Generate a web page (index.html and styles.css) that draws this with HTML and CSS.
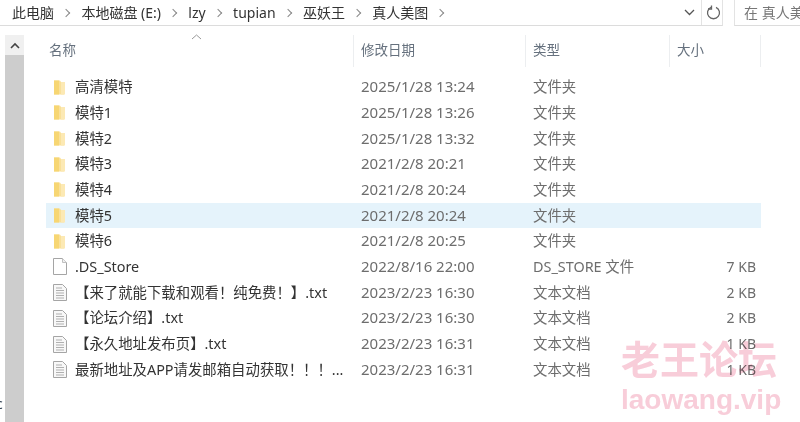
FILE: index.html
```html
<!DOCTYPE html>
<html lang="zh-CN">
<head>
    <meta charset="UTF-8">
    <title>真人美图</title>
    <link rel="stylesheet" href="styles.css">
</head>
<body>
    <svg class="defs" width="0" height="0">
        <symbol id="folder" viewBox="0 0 14 16">
            <path d="M1 1h6l1 1.500h3V15H1z" fill="#f9e09a"/>
            <path d="M8 2.500h4V15H8z" fill="#fce9b4"/>
            <path d="M1 1h5v14H1z" fill="#f7d673"/>
        </symbol>
        <symbol id="file" viewBox="0 0 14 17">
            <path d="M.5.500h9l4 4v12H.5z" fill="#fff" stroke="#a5a5a5"/>
            <path d="M9.500.500v4h4" fill="#f0f0f0" stroke="#c0c0c0"/>
        </symbol>
        <symbol id="txt" viewBox="0 0 14 17">
            <path d="M.5.500h9l4 4v12H.5z" fill="#f8f8f8" stroke="#a5a5a5"/>
            <path d="M3 4h6M3 6.500h8M3 9h8M3 11.500h8M3 14h8" stroke="#b0b0b0" fill="none"/>
        </symbol>
    </svg>

    <div class="topbar">
        <div class="crumbs">
            <span class="crumb first">此电脑</span>
            <span class="crumb">本地磁盘 (E:)</span>
            <span class="crumb">lzy</span>
            <span class="crumb">tupian</span>
            <span class="crumb">巫妖王</span>
            <span class="crumb">真人美图</span>
            <span class="addr-tools">
                <svg class="chev" width="11" height="7" viewBox="0 0 11 7"><path d="M1 1l4.500 4.500L10 1" fill="none" stroke="#555" stroke-width="1.300"/></svg>
                <svg class="refresh" width="15" height="15" viewBox="0 0 15 15"><path d="M5 2.300A6 6 0 1 0 10 2.300" fill="none" stroke="#666" stroke-width="1.300"/><path d="M5.500 .5v3.500h-3.500" fill="none" stroke="#666" stroke-width="1.300"/></svg>
            </span>
        </div>
        <div class="search">在 真人美</div>
    </div>

    <div class="main">
        <div class="scrollbar">
            <div class="scroll-up"><svg width="10" height="7" viewBox="0 0 10 7"><path d="M1 6l4-4 4 4" fill="none" stroke="#444" stroke-width="1.600"/></svg></div>
            <div class="scroll-thumb"></div>
        </div>

        <div class="list">
            <div class="head">
                <span class="name">名称</span>
                <span class="date">修改日期</span>
                <span class="type">类型</span>
                <span class="size">大小</span>
                <svg class="sort" width="11" height="6" viewBox="0 0 11 6"><path d="M1 5l4.500-4L10 5" fill="none" stroke="#999"/></svg>
            </div>

            <div class="row"><svg class="ico"><use href="#folder"/></svg><span class="name">高清模特</span><span class="date">2025/1/28 13:24</span><span class="type">文件夹</span><span class="size"></span></div>
            <div class="row"><svg class="ico"><use href="#folder"/></svg><span class="name">模特1</span><span class="date">2025/1/28 13:26</span><span class="type">文件夹</span><span class="size"></span></div>
            <div class="row"><svg class="ico"><use href="#folder"/></svg><span class="name">模特2</span><span class="date">2025/1/28 13:32</span><span class="type">文件夹</span><span class="size"></span></div>
            <div class="row"><svg class="ico"><use href="#folder"/></svg><span class="name">模特3</span><span class="date">2021/2/8 20:21</span><span class="type">文件夹</span><span class="size"></span></div>
            <div class="row"><svg class="ico"><use href="#folder"/></svg><span class="name">模特4</span><span class="date">2021/2/8 20:24</span><span class="type">文件夹</span><span class="size"></span></div>
            <div class="row selected"><svg class="ico"><use href="#folder"/></svg><span class="name">模特5</span><span class="date">2021/2/8 20:24</span><span class="type">文件夹</span><span class="size"></span></div>
            <div class="row"><svg class="ico"><use href="#folder"/></svg><span class="name">模特6</span><span class="date">2021/2/8 20:25</span><span class="type">文件夹</span><span class="size"></span></div>
            <div class="row"><svg class="ico"><use href="#file"/></svg><span class="name">.DS_Store</span><span class="date">2022/8/16 22:00</span><span class="type">DS_STORE 文件</span><span class="size">7 KB</span></div>
            <div class="row"><svg class="ico"><use href="#txt"/></svg><span class="name">【来了就能下载和观看！纯免费！】.txt</span><span class="date">2023/2/23 16:30</span><span class="type">文本文档</span><span class="size">2 KB</span></div>
            <div class="row"><svg class="ico"><use href="#txt"/></svg><span class="name">【论坛介绍】.txt</span><span class="date">2023/2/23 16:30</span><span class="type">文本文档</span><span class="size">2 KB</span></div>
            <div class="row"><svg class="ico"><use href="#txt"/></svg><span class="name">【永久地址发布页】.txt</span><span class="date">2023/2/23 16:31</span><span class="type">文本文档</span><span class="size">1 KB</span></div>
            <div class="row"><svg class="ico"><use href="#txt"/></svg><span class="name">最新地址及APP请发邮箱自动获取！！！...</span><span class="date">2023/2/23 16:31</span><span class="type">文本文档</span><span class="size">1 KB</span></div>
        </div>
    </div>

    <div class="edge-c">c</div>

    <div class="watermark">
        <div class="wm-cn">老王论坛</div>
        <div class="wm-en">laowang.vip</div>
    </div>
</body>
</html>
```

FILE: styles.css
```css
html, body {
    margin: 0;
    height: 100%;
}
body {
    width: 800px;
    height: 422px;
    overflow: hidden;
    background-color: #fff;
    font-family: "Noto Sans", "Noto Sans CJK SC", sans-serif;
    font-size: 14px;
    color: #333;
    position: relative;
}
.defs {
    position: absolute;
}
.topbar {
    display: flex;
    height: 26px;
    gap: 11px;
}
.crumbs {
    width: 723px;
    display: flex;
    align-items: center;
    box-sizing: border-box;
    padding-left: 12px;
    border-right: 1px solid #e3e3e3;
    border-bottom: 1px solid #dcdcdc;
    color: #333;
    line-height: 25px;
}
.crumb {
    white-space: nowrap;
}
.crumb::after {
    content: "";
    display: inline-block;
    width: 5px;
    height: 5px;
    border-top: 1px solid #888;
    border-right: 1px solid #888;
    transform: rotate(45deg);
    margin: 0 12.400px 2px 9px;
}
.addr-tools {
    margin-left: auto;
    display: flex;
    align-items: center;
    gap: 6px;
    height: 25px;
}
.refresh {
    border-left: 1px solid #e3e3e3;
    padding: 5px 1px 5px 4px;
}
.search {
    flex: 1;
    box-sizing: border-box;
    padding-left: 9px;
    border-left: 1px solid #e3e3e3;
    border-bottom: 1px solid #dcdcdc;
    color: #777;
    line-height: 25px;
    white-space: nowrap;
    overflow: hidden;
}
.main {
    display: flex;
    height: 396px;
}
.scrollbar {
    width: 19px;
    margin-left: 5px;
    margin-top: 9px;
    background-color: #f0f0f0;
    display: flex;
    flex-direction: column;
}
.scroll-up {
    height: 20px;
    display: flex;
    align-items: center;
    justify-content: center;
}
.scroll-thumb {
    flex: 1;
    background-color: #cdcdcd;
}
.list {
    margin-left: 22px;
    width: 715px;
}
.head {
    display: flex;
    position: relative;
    height: 48.300px;
    align-items: center;
    color: #66717e;
    font-size: 13.500px;
}
.head span {
    height: 32px;
    line-height: 30px;
    margin-top: 2px;
    border-right: 1px solid #eceef0;
    box-sizing: border-box;
}
.sort {
    position: absolute;
    left: 145px;
    top: 8px;
}
.name {
    width: 308px;
    padding-left: 3px;
    box-sizing: border-box;
    white-space: nowrap;
}
.date {
    width: 172px;
    padding-left: 7px;
    box-sizing: border-box;
    white-space: nowrap;
}
.type {
    width: 144px;
    padding-left: 7px;
    box-sizing: border-box;
    white-space: nowrap;
}
.size {
    width: 91px;
    padding-left: 7px;
    box-sizing: border-box;
    white-space: nowrap;
}
.row {
    display: flex;
    height: 25.700px;
    line-height: 25.700px;
    align-items: center;
    color: #6d6d6d;
    font-size: 14.400px;
}
.row .name {
    width: 287px;
    padding-left: 8px;
    color: #333;
}
.row .date {
    font-size: 15px;
}
.row .size {
    text-align: right;
    width: 91px;
    padding-right: 5px;
    font-size: 14px;
}
.ico {
    width: 14px;
    height: 17px;
    margin-left: 7px;
    flex: none;
}
.selected {
    background-color: #e5f3fb;
}
.edge-c {
    position: absolute;
    left: -4px;
    top: 394px;
    color: #345;
}
.watermark {
    position: absolute;
    left: 621px;
    top: 338px;
    color: #f8cdd9;
    font-weight: 700;
    pointer-events: none;
    mix-blend-mode: multiply;
    line-height: 1;
}
.wm-cn {
    font-family: "Noto Sans CJK SC", sans-serif;
    font-size: 39px;
}
.wm-en {
    font-family: "Liberation Sans", sans-serif;
    font-size: 28px;
    margin-top: 9px;
    letter-spacing: 0;
}
```
